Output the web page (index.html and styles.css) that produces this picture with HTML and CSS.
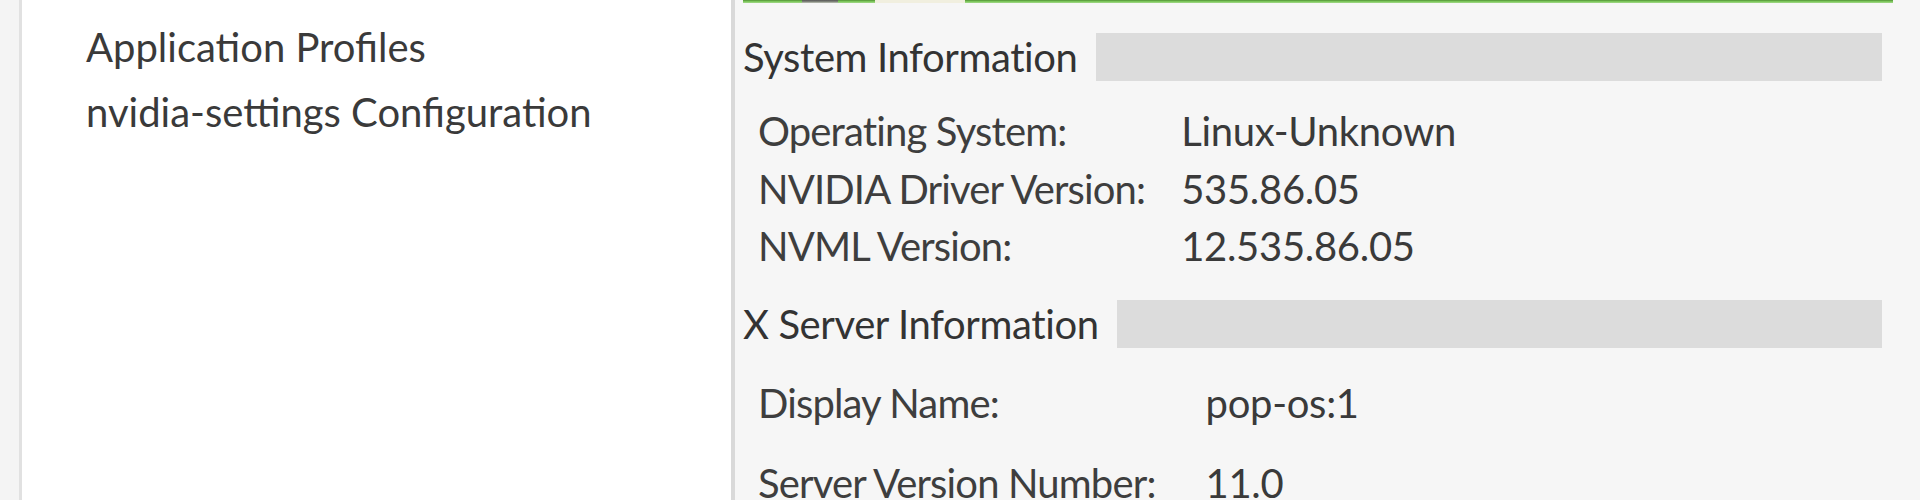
FILE: index.html
```html
<!DOCTYPE html>
<html lang="en">
<head>
<meta charset="utf-8">
<title>NVIDIA X Server Settings</title>
<link rel="stylesheet" href="styles.css">
</head>
<body>
<div class="window">
  <aside class="sidebar">
    <ul class="tree">
      <li class="tree-item tree-item-clipped">X Server Display Configuration</li>
      <li class="tree-item">Application Profiles</li>
      <li class="tree-item">nvidia-settings Configuration</li>
    </ul>
  </aside>
  <main class="content">
    <div class="banner">
      <span class="banner-seg green w-59"></span>
      <span class="banner-seg dark w-36"></span>
      <span class="banner-seg green w-37"></span>
      <span class="banner-seg cream w-90"></span>
      <span class="banner-seg green fill"></span>
    </div>

    <section class="section section-system">
      <div class="section-header">
        <span class="section-title">System Information</span>
        <span class="section-rule"></span>
      </div>
      <div class="info-grid info-grid-tight">
        <span class="info-label">Operating System:</span>
        <span class="info-value">Linux-Unknown</span>
        <span class="info-label">NVIDIA Driver Version:</span>
        <span class="info-value">535.86.05</span>
        <span class="info-label">NVML Version:</span>
        <span class="info-value">12.535.86.05</span>
      </div>
    </section>

    <section class="section section-xserver">
      <div class="section-header">
        <span class="section-title">X Server Information</span>
        <span class="section-rule"></span>
      </div>
      <div class="info-grid info-grid-loose">
        <span class="info-label">Display Name:</span>
        <span class="info-value">pop-os:1</span>
        <span class="info-label">Server Version Number:</span>
        <span class="info-value">11.0</span>
      </div>
    </section>
  </main>
</div>
</body>
</html>
```

FILE: styles.css
```css
* {
  box-sizing: border-box;
}

html, body {
  margin: 0;
  padding: 0;
  height: 100%;
  overflow: hidden;
}

body {
  background: #f4f4f4;
  font-family: "Lato", "Open Sans", "Noto Sans", sans-serif;
  font-size: 40px;
  color: #3c3c3c;
}

.window {
  display: flex;
  height: 500px;
}

/* ---------- left tree panel ---------- */
.sidebar {
  margin-left: 19px;
  width: 716px;
  flex: none;
  background: #ffffff;
  border-left: 3px solid #e1e1e1;
  border-right: 4px solid #d9d9d9;
  overflow: hidden;
}

.tree {
  list-style: none;
  margin: -50px 0 0 0;
  padding: 0 0 0 64px;
}

.tree-item {
  height: 65px;
  line-height: 65px;
  white-space: nowrap;
  color: #3a3a3a;
}

.tree-item-clipped {
  line-height: 52px;
  color: #8a8a8a;
}

/* ---------- right content ---------- */
.content {
  flex: 1;
  background: #f6f6f6;
  padding: 0 27px 0 8px;
  overflow: hidden;
}

.banner {
  display: flex;
  height: 3px;
}

.banner-seg {
  display: block;
  height: 3px;
}

.banner-seg.green {
  background: linear-gradient(to bottom, #4f8637 0, #6fbe4b 1px, #a3d98a 3px);
}

.banner-seg.dark {
  background: linear-gradient(to bottom, #555555 0, #8a8f84 2px, #c9cdc2 3px);
}

.banner-seg.cream {
  background: #f1efdf;
}

.w-59 { width: 59px; }
.w-36 { width: 36px; }
.w-37 { width: 37px; }
.w-90 { width: 90px; }
.fill { flex: 1; }

.section-system {
  margin-top: 30px;
}

.section-xserver {
  margin-top: 24px;
}

.section-header {
  display: flex;
  align-items: center;
  height: 48px;
}

.section-title {
  line-height: 48px;
  white-space: nowrap;
  color: #333333;
  letter-spacing: -0.4px;
}

.section-rule {
  flex: 1;
  height: 48px;
  margin-left: 18px;
  margin-right: 11px;
  background: #dcdcdc;
}

.info-grid {
  display: grid;
  grid-template-columns: auto 1fr;
  padding-left: 15px;
  white-space: nowrap;
}

.info-grid-tight {
  margin-top: 22px;
  column-gap: 36px;
  grid-auto-rows: 57.5px;
  line-height: 57.5px;
}

.info-grid-loose {
  margin-top: 15px;
  column-gap: 50px;
  grid-auto-rows: 80px;
  line-height: 80px;
}

.info-label {
  color: #3e3e3e;
  letter-spacing: -0.85px;
}

.info-value {
  color: #3a3a3a;
  letter-spacing: -0.3px;
}
```
